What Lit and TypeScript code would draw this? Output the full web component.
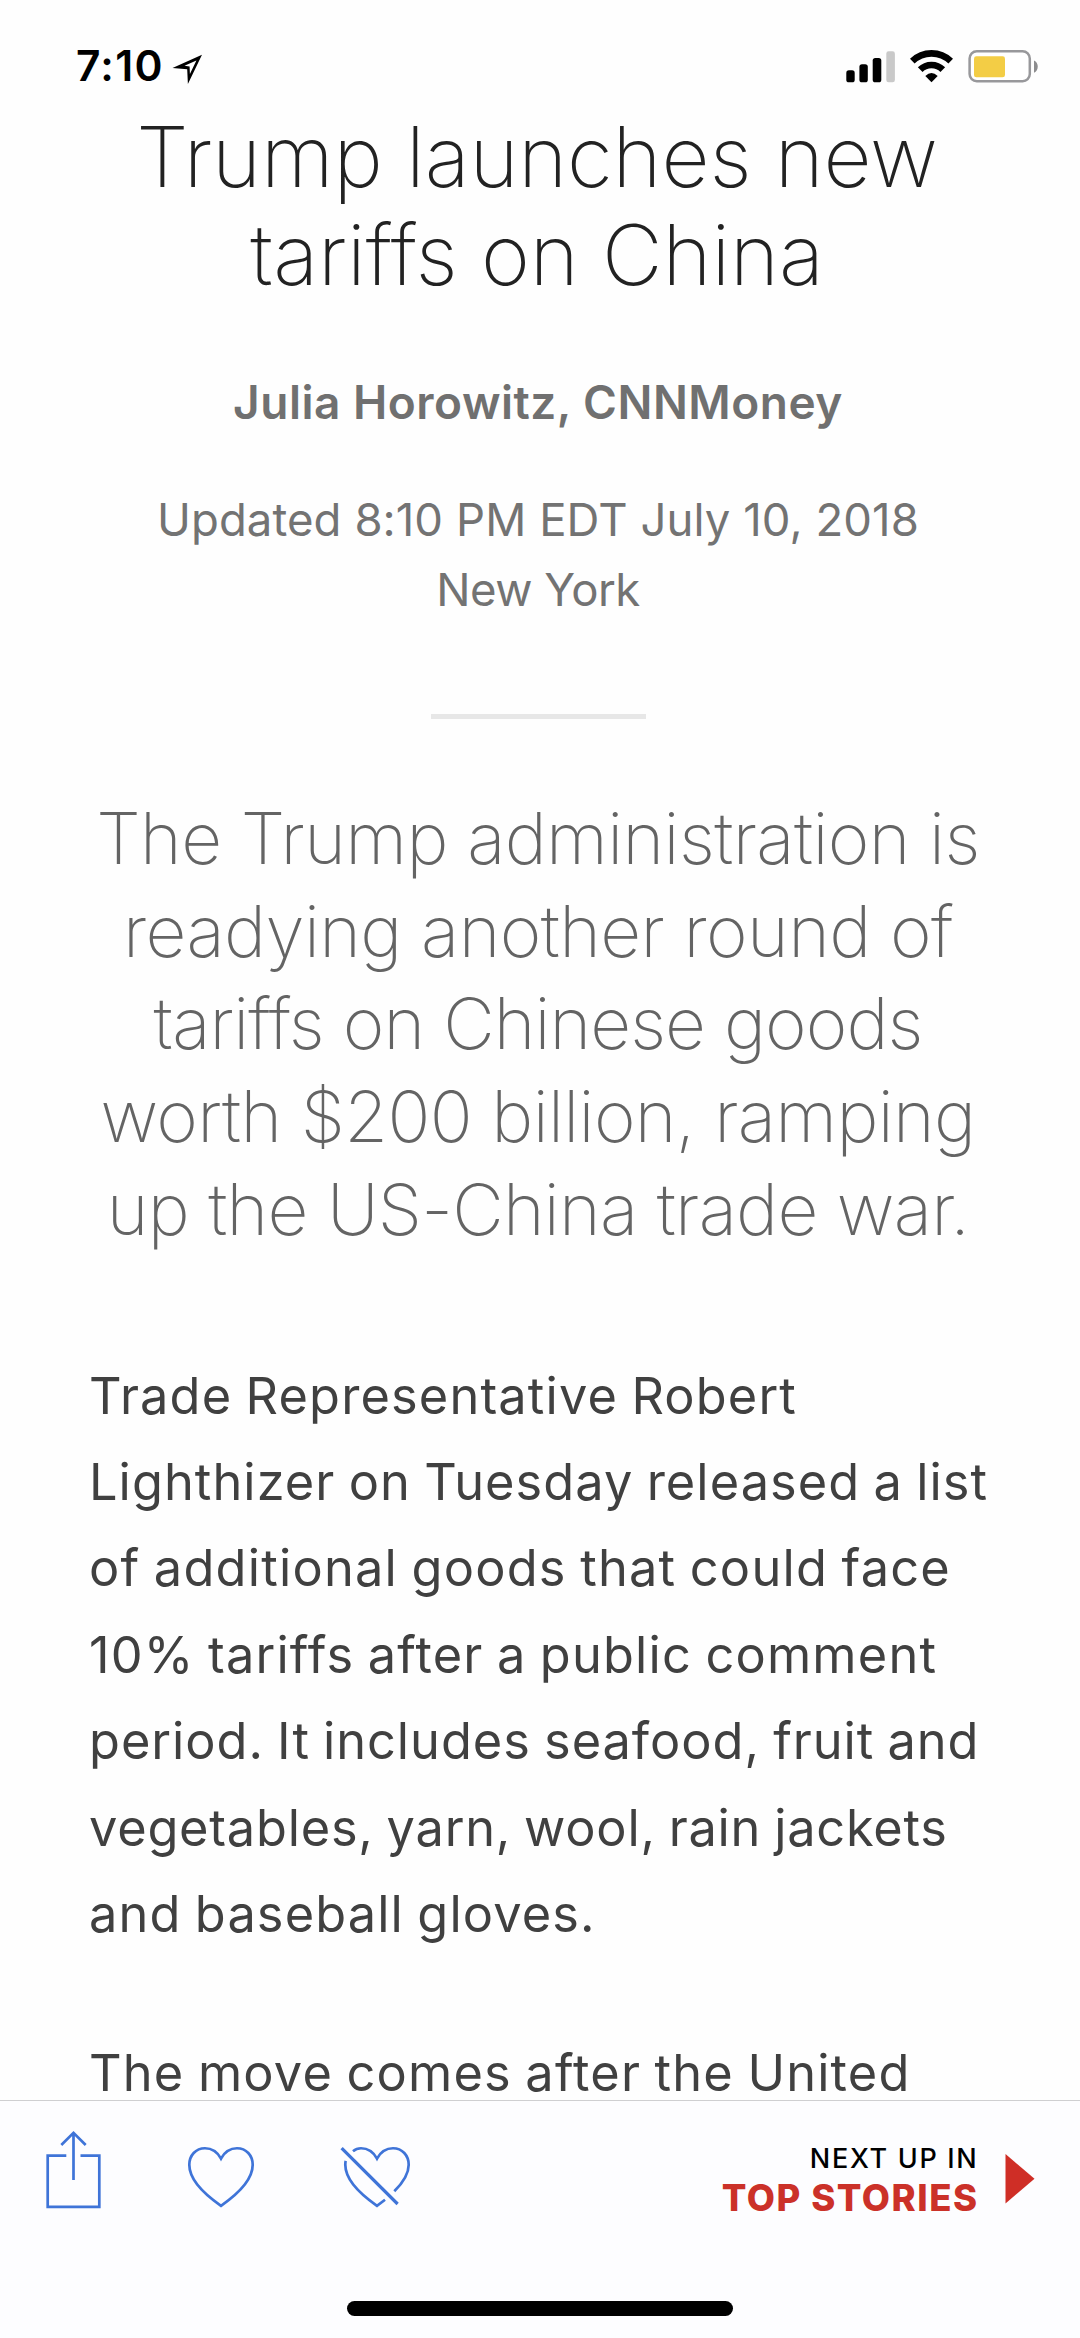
import { LitElement, html, css, svg } from "lit";
import { customElement } from "lit/decorators.js";
import { styleMap } from "lit/directives/style-map.js";

/** A line of copy and its tracking in pixels. */
type Line = [text: string, tracking: number];

const headline: Line[] = [
  ["Trump launches new", -0.13],
  ["tariffs on China", -0.07],
];
const byline: Line[] = [["Julia Horowitz, CNNMoney", 0.5]];
const dateline: Line[] = [
  ["Updated 8:10 PM EDT July 10, 2018", 0.07],
  ["New York", -0.5],
];
const lead: Line[] = [
  ["The Trump administration is", -0.61],
  ["readying another round of", -0.6],
  ["tariffs on Chinese goods", -0.93],
  ["worth $200 billion, ramping", -0.64],
  ["up the US-China trade war.", -0.72],
];
const paragraphs: Line[][] = [
  [
    ["Trade Representative Robert", 1.15],
    ["Lighthizer on Tuesday released a list", 1.06],
    ["of additional goods that could face", 1.23],
    ["10% tariffs after a public comment", 1.19],
    ["period. It includes seafood, fruit and", 0.97],
    ["vegetables, yarn, wool, rain jackets", 0.77],
    ["and baseball gloves.", 1.13],
  ],
  [["The move comes after the United", 1.2]],
];

const lines = (items: Line[]) =>
  items.map(
    ([text, tracking]) =>
      html`<span class="line" style=${styleMap({ letterSpacing: `${tracking}px` })}>${text}</span>`
  );

const heart =
  "M34 13.6C30.5 7.2 24.500 3.250 18 3.250C8.800 3.250 2.300 10.500 2.300 19.800C2.300 34 17 49 34 60.800C51 49 65.700 34 65.700 19.800C65.700 10.500 59.200 3.250 50 3.250C43.500 3.250 37.500 7.200 34 13.600Z";

@customElement("status-bar")
class StatusBar extends LitElement {
  static styles = css`
    :host {
      display: flex;
      justify-content: space-between;
      box-sizing: border-box;
      height: 126px;
      padding: 44px 41px 0 76px;
      background: #fefefe;
    }
    .group { display: flex; align-items: flex-start; }
    .time {
      font: 600 42.5px/44px Inter, "Liberation Sans", sans-serif;
      letter-spacing: 1.3px;
      color: #000;
    }
    .arrow { margin: 10px 0 0 7px; }
    .icons { padding-top: 5.5px; }
    .wifi { margin-left: 14px; }
    .battery { margin-left: 15px; }
    svg { display: block; }
  `;
  render() {
    return html`
      <div class="group">
        <span class="time">7:10</span>
        <svg class="arrow" width="34" height="32" viewBox="0 0 34 32">
          <path d="M1.500 14L31 .800L16.900 30L16.200 15.200Z" fill="#000" />
          <path d="M13.500 11.800L25.400 6.500L18.900 20L18.600 12.600Z" fill="#fff" />
        </svg>
      </div>
      <div class="group icons">
        <svg width="50" height="33" viewBox="0 0 50 33">
          <rect x="0.300" y="20.300" width="8.400" height="12" rx="2.600" />
          <rect x="13.400" y="14.300" width="8.400" height="18" rx="2.600" />
          <rect x="26.700" y="8" width="8.600" height="24.300" rx="2.600" />
          <rect x="40.300" y="1.300" width="8.600" height="31" rx="2.400" fill="#c9c9c9" />
        </svg>
        <svg class="wifi" width="43" height="33" viewBox="0 0 43 33">
          <g fill="none" stroke="#000" stroke-width="6.600">
            <path d="M2.300 11.200A27.500 27.500 0 0 1 40.700 11.200" />
            <path d="M10.200 19.700A16 16 0 0 1 32.800 19.700" />
          </g>
          <path d="M15.300 26Q21.500 20 27.700 26L21.500 32.300Z" />
        </svg>
        <svg class="battery" width="71" height="33" viewBox="0 0 71 33">
          <rect x="1.600" y="1.300" width="60.200" height="30" rx="7.200" fill="#fff" stroke="#98989b" stroke-width="2.500" />
          <rect x="6" y="6.300" width="31" height="21" rx="2.400" fill="#f3cd45" />
          <path d="M66 10.600C71 12.800 71 20.600 66 22.800Z" fill="#8c8c8e" />
        </svg>
      </div>
    `;
  }
}

@customElement("story-article")
class StoryArticle extends LitElement {
  static styles = css`
    :host {
      display: block;
      font-family: Inter, "Liberation Sans", sans-serif;
    }
    h1, h2, p { margin: 0; font-weight: inherit; }
    .line { display: block; white-space: nowrap; }
    .centered { text-align: center; padding-right: 4px; }
    .headline { font-size: 83.5px; line-height: 97.7px; font-weight: 200; color: #222; padding-right: 6px; }
    .byline { margin-top: 66px; font-size: 46px; line-height: 66px; font-weight: 600; color: #707070; }
    .dateline { margin-top: 50px; font-size: 45.5px; line-height: 69.3px; color: #737373; }
    .rule { width: 215px; height: 5px; margin: 90px 0 0 431px; background: #e7e7e7; }
    .lead { margin-top: 73px; font-size: 71px; line-height: 92.7px; font-weight: 200; color: #646464; }
    .body { padding-left: 89px; font-size: 50.5px; line-height: 86.4px; word-spacing: -2px; color: #404040; }
    .body p { margin-top: 73px; }
    .body p:first-child { margin-top: 97px; }
  `;
  render() {
    return html`
      <h1 class="headline centered">${lines(headline)}</h1>
      <p class="byline centered">${lines(byline)}</p>
      <p class="dateline centered">${lines(dateline)}</p>
      <div class="rule"></div>
      <h2 class="lead centered">${lines(lead)}</h2>
      <div class="body">${paragraphs.map((p) => html`<p>${lines(p)}</p>`)}</div>
    `;
  }
}

@customElement("story-toolbar")
class StoryToolbar extends LitElement {
  static styles = css`
    :host {
      display: flex;
      flex-direction: column;
      align-items: center;
      justify-content: space-between;
      box-sizing: border-box;
      height: 238px;
      padding-bottom: 22px;
      border-top: 1px solid #cfcfd1;
      background: #fdfdff;
      font-family: Inter, "Liberation Sans", sans-serif;
    }
    .row { display: flex; width: 100%; align-items: flex-start; }
    .actions { display: flex; flex: 1; padding: 29px 0 0 46px; }
    .actions svg { display: block; fill: none; stroke: #3f74d8; stroke-width: 2.7; }
    .like { margin: 15px 0 0 85.5px; }
    .dislike { margin: 15px 0 0 84px; }
    .next { display: flex; align-items: flex-start; gap: 26px; padding: 41px 45.5px 0 0; }
    .labels { display: flex; flex-direction: column; align-items: flex-end; gap: 2px; }
    .kicker { font-size: 27px; line-height: 33px; font-weight: 500; letter-spacing: 1.7px; color: #000; }
    .section { font-size: 36.5px; line-height: 43px; font-weight: 800; letter-spacing: 1.5px; color: #cb3129; }
    .play { display: block; margin-top: 12px; }
    .home { width: 386px; height: 15px; border-radius: 8px; background: #000; }
  `;
  render() {
    return html`
      <div class="row">
        <div class="actions">
          <svg width="55" height="80" viewBox="0 0 55 80">
            <path d="M20.300 25.700H1.700V76.800H53.300V25.700H34.500" />
            <path d="M27.500 50V2.500M15.300 15L27.500 2.900L39.700 15" />
          </svg>
          <svg class="like" width="68" height="66" viewBox="0 0 68 66"><path d=${heart} /></svg>
          <svg class="dislike" width="72" height="66" viewBox="-4 0 72 66">
            ${svg`
              <path d="M10 6.200C12.400 4.200 15 3.250 18 3.250C24.500 3.250 30.500 7.200 34 13.600C37.500 7.200 43.500 3.250 50 3.250C59.200 3.250 65.700 10.500 65.700 19.800C65.700 28.800 60.200 37.500 51.300 46.300" />
              <path d="M2.700 15.800C2.300 17.100 2.300 18.400 2.300 19.800C2.300 34 17 49 34 60.800L42 54.700" />
              <path stroke-width="3.200" d="M-1.400 3.100L54.600 59" />
            `}
          </svg>
        </div>
        <div class="next">
          <div class="labels">
            <span class="kicker">NEXT UP IN</span>
            <span class="section">TOP STORIES</span>
          </div>
          <svg class="play" width="30" height="50" viewBox="0 0 30 50"><path d="M.500 0L29.500 24.800L.500 49.500Z" fill="#cf2e26" /></svg>
        </div>
      </div>
      <div class="home"></div>
    `;
  }
}

@customElement("app-root")
class AppRoot extends LitElement {
  static styles = css`
    :host {
      display: flex;
      flex-direction: column;
      width: 1080px;
      height: 2338px;
      overflow: hidden;
      background: #fefefe;
    }
    .status { position: relative; z-index: 1; flex: none; }
    .story { flex: 1; min-height: 0; overflow: hidden; margin-top: -18px; }
    .toolbar { flex: none; }
  `;
  render() {
    return html`
      <status-bar class="status"></status-bar>
      <story-article class="story"></story-article>
      <story-toolbar class="toolbar"></story-toolbar>
    `;
  }
}
